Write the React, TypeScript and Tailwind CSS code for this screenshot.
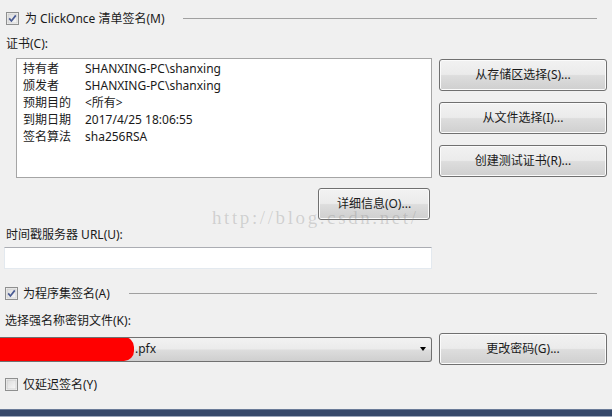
const btn =
  "flex items-center justify-center rounded-[3px] border border-[#707070] bg-[linear-gradient(to_bottom,#f2f2f2_0%,#ebebeb_48%,#dddddd_52%,#cfcfcf_100%)] shadow-[inset_0_0_0_1px_#fbfbfb] text-[12px] text-[#1a1a1a]";

function Check({ checked }: { checked?: boolean }) {
  return (
    <svg width="13" height="13" viewBox="0 0 13 13" className="shrink-0">
      <defs>
        <linearGradient id="cb" x1="0" y1="0" x2="1" y2="1">
          <stop offset="0" stopColor="#dcdcdc" />
          <stop offset="1" stopColor="#f8f8f8" />
        </linearGradient>
      </defs>
      <rect x="0.5" y="0.5" width="12" height="12" fill="#f4f4f4" stroke="#8e8f8f" />
      <rect x="2" y="2" width="9" height="9" fill="url(#cb)" stroke="#c3c3c3" strokeWidth="0.6" />
      {checked && (
        <path d="M3.2 6.4 L5.4 9 L9.8 3.4" fill="none" stroke="#4a5b93" strokeWidth="1.7" />
      )}
    </svg>
  );
}

const certRows: [string, string][] = [
  ["持有者", "SHANXING-PC\\shanxing"],
  ["颁发者", "SHANXING-PC\\shanxing"],
  ["预期目的", "<所有>"],
  ["到期日期", "2017/4/25 18:06:55"],
  ["签名算法", "sha256RSA"],
];

export default function App() {
  return (
    <div className="relative w-[612px] h-[417px] bg-[#f0f0f0] flex flex-col overflow-hidden text-[12px] text-[#1a1a1a] font-['Noto_Sans','Noto_Sans_CJK_SC',sans-serif]">
      {/* ClickOnce section */}
      <div className="mt-[12px] h-[13px] flex items-center pl-[6px]">
        <Check checked />
        <span className="ml-[6px] leading-[16px]">为 ClickOnce 清单签名(M)</span>
        <div className="ml-[18px] mr-[15px] flex-1 h-px bg-[#a0a0a0]" />
      </div>

      <div className="mt-[11px] h-[16px] leading-[16px] pl-[6px]">证书(C):</div>

      <div className="mt-[6px] flex">
        <div className="ml-[16px] w-[416px] h-[120px] bg-white border border-[#a5a5a5] pl-[6px] pt-[1px]">
          {certRows.map(([k, v]) => (
            <div key={k} className="flex leading-[17px]">
              <span className="w-[62px]">{k}</span>
              <span>{v}</span>
            </div>
          ))}
        </div>
        <div className="ml-[7px] w-[168px] pt-[1px] flex flex-col gap-[11px]">
          <div className={`${btn} h-[32px]`}>从存储区选择(S)...</div>
          <div className={`${btn} h-[32px]`}>从文件选择(I)...</div>
          <div className={`${btn} h-[32px]`}>创建测试证书(R)...</div>
        </div>
      </div>

      <div className={`${btn} mt-[10px] ml-[318px] w-[112px] h-[32px]`}>详细信息(O)...</div>

      <div className="mt-[7px] h-[16px] leading-[16px] pl-[6px]">时间戳服务器 URL(U):</div>
      <div className="mt-[4px] ml-[4px] w-[428px] h-[22px] bg-white border border-[#e3e9ef] border-t-[#abadb3]" />

      {/* Assembly section */}
      <div className="mt-[18px] h-[13px] flex items-center pl-[5px]">
        <Check checked />
        <span className="ml-[5px] leading-[16px]">为程序集签名(A)</span>
        <div className="ml-[19px] mr-[15px] flex-1 h-px bg-[#a0a0a0]" />
      </div>

      <div className="mt-[13px] h-[16px] leading-[16px] pl-[5px]">选择强名称密钥文件(K):</div>

      <div className="mt-[4px] h-[32px] flex items-center">
        <div className="w-[432px] h-[25px] flex items-center rounded-r-[3px] border border-l-0 border-[#707070] bg-[linear-gradient(to_bottom,#f2f2f2_0%,#ebebeb_48%,#dddddd_52%,#cfcfcf_100%)] overflow-hidden">
          <div className="w-[134px] h-[24px] bg-[#ff0000] rounded-r-[10px]" />
          <span className="ml-px">.pfx</span>
          <div className="flex-1" />
          <div className="mr-[3px] w-0 h-0 border-l-[3.5px] border-r-[3.5px] border-t-[4px] border-l-transparent border-r-transparent border-t-black" />
          <div className="w-[2px]" />
        </div>
        <div className={`${btn} ml-[7px] w-[168px] h-[32px]`}>更改密码(G)...</div>
      </div>

      <div className="mt-[13px] h-[13px] flex items-center pl-[5px]">
        <Check />
        <span className="ml-[5px] leading-[16px]">仅延迟签名(Y)</span>
      </div>

      <div className="mt-auto h-[8px] bg-[#35486a] border-t border-[#6a7b98] border-b border-b-[#9aa6bb]" />

      <div className="absolute left-[212px] top-[207px] leading-[22px] text-[19px] tracking-[2.6px] text-[rgba(140,140,140,0.32)] font-['Liberation_Serif',serif] whitespace-nowrap pointer-events-none">
        http://blog.csdn.net/
      </div>
    </div>
  );
}
